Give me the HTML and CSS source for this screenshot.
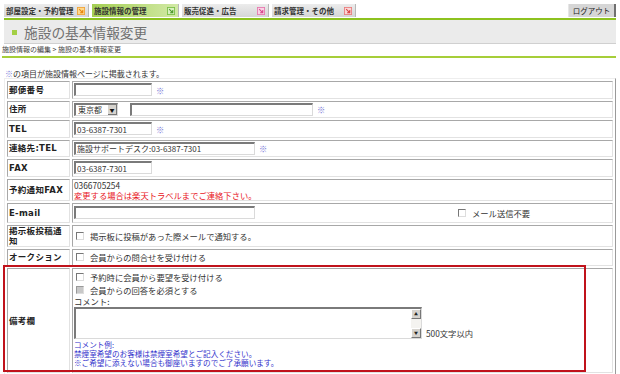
FILE: index.html
```html
<!DOCTYPE html>
<html lang="ja">
<head>
  <meta charset="UTF-8">
  <title>施設の基本情報変更</title>
  <link rel="stylesheet" href="styles.css">
</head>
<body>
  <div class="page">
    <div class="nav">
      <a class="tab">部屋設定・予約管理
        <svg class="tab-icon" viewBox="0 0 9 9" width="9" height="9"><rect x="0.5" y="0.5" width="8" height="8" fill="#ffd98c" stroke="#f2a43a"/><path d="M2.5 2.5 L6.5 6.5 M6.5 3.5 V6.5 H3.5" stroke="#e8850f" stroke-width="1.2" fill="none"/></svg>
      </a>
      <a class="tab active">施設情報の管理
        <svg class="tab-icon" viewBox="0 0 9 9" width="9" height="9"><rect x="0.5" y="0.5" width="8" height="8" fill="#d8efc0" stroke="#7cc04a"/><path d="M2.5 2.5 L6.5 6.5 M6.5 3.5 V6.5 H3.5" stroke="#4d9a2a" stroke-width="1.2" fill="none"/></svg>
      </a>
      <a class="tab">販売促進・広告
        <svg class="tab-icon" viewBox="0 0 9 9" width="9" height="9"><rect x="0.5" y="0.5" width="8" height="8" fill="#f9d3e6" stroke="#e77bb0"/><path d="M2.5 2.5 L6.5 6.5 M6.5 3.5 V6.5 H3.5" stroke="#d8488e" stroke-width="1.2" fill="none"/></svg>
      </a>
      <a class="tab">請求管理・その他
        <svg class="tab-icon" viewBox="0 0 9 9" width="9" height="9"><rect x="0.5" y="0.5" width="8" height="8" fill="#fbd6d6" stroke="#ea7f7f"/><path d="M2.5 2.5 L6.5 6.5 M6.5 3.5 V6.5 H3.5" stroke="#d94444" stroke-width="1.2" fill="none"/></svg>
      </a>
      <a class="logout">ログアウト</a>
    </div>

    <div class="title-bar">
      <span class="title-mark"></span>
      <h1>施設の基本情報変更</h1>
    </div>
    <div class="crumb">施設情報の編集 &gt; 施設の基本情報変更</div>

    <p class="note"><span class="mark">※</span>の項目が施設情報ページに掲載されます。</p>

    <table class="info">
      <tr>
        <th>郵便番号</th>
        <td><div class="line"><input class="field short" type="text"><span class="mark">※</span></div></td>
      </tr>
      <tr>
        <th>住所</th>
        <td>
          <div class="line">
            <span class="select-wrap">
              <select class="pref"><option>東京都</option></select>
              <span class="select-btn">▼</span>
            </span>
            <input class="field address" type="text">
            <span class="mark">※</span>
          </div>
        </td>
      </tr>
      <tr>
        <th>TEL</th>
        <td><div class="line"><input class="field short" type="text" value="03-6387-7301"><span class="mark">※</span></div></td>
      </tr>
      <tr>
        <th>連絡先:TEL</th>
        <td><div class="line"><input class="field long" type="text" value="施設サポートデスク:03-6387-7301"><span class="mark">※</span></div></td>
      </tr>
      <tr>
        <th>FAX</th>
        <td><div class="line"><input class="field short" type="text" value="03-6387-7301"></div></td>
      </tr>
      <tr class="row-fax">
        <th>予約通知FAX</th>
        <td class="top">
          <div class="text-line">0366705254</div>
          <div class="text-line warn">変更する場合は楽天トラベルまでご連絡下さい。</div>
        </td>
      </tr>
      <tr class="row-mail">
        <th>E-mail</th>
        <td>
          <div class="line">
            <input class="field long" type="text">
            <label class="check mail-off"><input type="checkbox">メール送信不要</label>
          </div>
        </td>
      </tr>
      <tr class="row-board">
        <th>掲示板投稿通知</th>
        <td><label class="check"><input type="checkbox">掲示板に投稿があった際メールで通知する。</label></td>
      </tr>
      <tr>
        <th>オークション</th>
        <td><label class="check"><input type="checkbox">会員からの問合せを受け付ける</label></td>
      </tr>
      <tr class="row-memo">
        <th>備考欄</th>
        <td class="top">
          <label class="check memo-check"><input type="checkbox">予約時に会員から要望を受け付ける</label>
          <label class="check memo-check"><input type="checkbox" disabled>会員からの回答を必須とする</label>
          <div class="text-line">コメント:</div>
          <div class="memo-line">
            <div class="memo-box">
              <textarea class="memo"></textarea>
              <div class="scroll">
                <span class="scroll-btn">▲</span>
                <span class="scroll-btn">▼</span>
              </div>
            </div>
            <span class="limit">500文字以内</span>
          </div>
          <div class="example">
            <div>コメント例:</div>
            <div>禁煙室希望のお客様は禁煙室希望とご記入ください。</div>
            <div>※ご希望に添えない場合も御座いますのでご了承願います。</div>
          </div>
        </td>
      </tr>
    </table>

    <div class="highlight"></div>
  </div>
</body>
</html>
```

FILE: styles.css
```css
body {
  margin: 0;
  font-family: "Noto Sans CJK JP", sans-serif;
  font-size: 8.3px;
  color: #333;
  background-color: #fff;
}
.page {
  position: relative;
  width: 612px;
  margin-left: 4px;
  padding-top: 4px;
}

/* top navigation */
.nav {
  display: flex;
  gap: 3px;
  height: 13px;
  padding-bottom: 1px;
  border-bottom: 2px solid #8dc21f;
}
.tab {
  display: flex;
  align-items: center;
  justify-content: space-between;
  width: 87px;
  padding: 0 3px 0 2px;
  box-sizing: border-box;
  background: linear-gradient(#ececec, #d6d6d6);
  border-right: 1px solid #b8b8b8;
  font-size: 7.5px;
  font-weight: bold;
  line-height: 13px;
  color: #333;
}
.tab:first-child {
  width: 85px;
}
.tab:nth-child(4) {
  width: 84px;
}
.tab.active {
  background: linear-gradient(to right, #a4cf53, #d2e9a6);
}
.tab-icon {
  display: block;
  width: 8px;
  height: 8px;
}
.logout {
  margin-left: auto;
  width: 48px;
  box-sizing: border-box;
  background-color: #d6d6d6;
  border-left: 1px solid #e6e6e6;
  border-right: 2px solid #6f6f6f;
  text-align: center;
  font-size: 7.5px;
  line-height: 13px;
  color: #222;
}

/* page title */
.title-bar {
  display: flex;
  align-items: center;
  height: 23px;
  background-color: #ebebeb;
  border-bottom: 1px solid #d0d0d0;
}
.title-mark {
  width: 5px;
  height: 5px;
  margin: 1px 7px 0 8px;
  background-color: #a3cf45;
}
.title-bar h1 {
  margin: 0;
  font-size: 13.7px;
  font-weight: normal;
  color: #707070;
}
.crumb {
  height: 12px;
  line-height: 11px;
  font-size: 7px;
  color: #444;
  border-bottom: 2px solid #a6ce39;
  margin-left: -2px;
}
.note {
  margin: 11px 0 0 1px;
  line-height: 9px;
  font-size: 8px;
}
.mark {
  color: #7a7ad8;
}

/* form table */
.info {
  width: 612px;
  border-collapse: separate;
  border-spacing: 2px;
  border: 1px solid;
  border-color: #eeeeee #9a9a9a #9a9a9a #eeeeee;
}
.info tr {
  height: 17.5px;
}
.info th,
.info td {
  padding: 0 1px;
  border: 1px solid;
  border-color: #a8a8a8 #e2e2e2 #e2e2e2 #a8a8a8;
  vertical-align: middle;
}
.info th {
  width: 59px;
  text-align: left;
  font-family: "DejaVu Sans", "Noto Sans CJK JP", sans-serif;
  font-size: 8.5px;
  line-height: 10px;
  letter-spacing: 0.3px;
  color: #222;
}
.info td.top {
  vertical-align: top;
}
.info .row-fax,
.info .row-mail {
  height: 20px;
}
.info .row-board {
  height: 21.5px;
}
.info .row-memo {
  height: 105px;
}

.line {
  display: flex;
  align-items: center;
  gap: 4px;
}
.field {
  height: 13px;
  box-sizing: border-box;
  margin: 0;
  padding: 0 1px;
  border-top: 2px solid #7a7a7a;
  border-left: 2px solid #7a7a7a;
  border-right: 1px solid #dadada;
  border-bottom: 1px solid #dadada;
  font-family: "Noto Sans CJK JP", sans-serif;
  font-size: 8px;
  color: #333;
  background-color: #fff;
}
.field.short {
  width: 78px;
}
.field.long {
  width: 181px;
}
.field.address {
  width: 183px;
  margin-left: 8px;
}

.select-wrap {
  position: relative;
  display: block;
  width: 44px;
  height: 13px;
}
.pref {
  appearance: none;
  width: 44px;
  height: 13px;
  box-sizing: border-box;
  margin: 0;
  padding: 0 2px;
  border-top: 2px solid #7a7a7a;
  border-left: 2px solid #7a7a7a;
  border-right: 1px solid #dadada;
  border-bottom: 1px solid #dadada;
  border-radius: 0;
  font-family: "Noto Sans CJK JP", sans-serif;
  font-size: 8px;
  line-height: 9px;
  color: #333;
  background-color: #fff;
}
.select-btn {
  position: absolute;
  top: 2px;
  right: 1px;
  width: 9px;
  height: 10px;
  box-sizing: border-box;
  background-color: #d6d3ce;
  border-right: 1px solid #777;
  border-bottom: 1px solid #777;
  font-size: 5px;
  line-height: 9px;
  text-align: center;
  color: #111;
}

.check {
  display: flex;
  align-items: center;
  gap: 6px;
  padding-left: 2px;
  line-height: 10px;
}
.check input {
  appearance: none;
  width: 8px;
  height: 8px;
  margin: 0;
  box-sizing: border-box;
  border-top: 1px solid #777;
  border-left: 1px solid #777;
  border-right: 1px solid #ddd;
  border-bottom: 1px solid #ddd;
  background-color: #fff;
}
.check input:disabled {
  background-color: #c8c8c8;
  border-color: #999 #ddd #ddd #999;
}
.mail-off {
  margin-left: 197px;
}
.memo-check {
  height: 13px;
}
.row-memo td {
  padding-top: 1px;
}

.text-line {
  line-height: 10px;
}
.warn {
  color: #e8141c;
}
.memo-line {
  display: flex;
  align-items: flex-end;
  gap: 4px;
  margin-top: 1px;
}
.memo-box {
  display: flex;
  width: 348px;
  height: 32px;
  box-sizing: border-box;
  border-top: 2px solid #7a7a7a;
  border-left: 2px solid #7a7a7a;
  border-right: 1px solid #dadada;
  border-bottom: 1px solid #dadada;
  background-color: #fff;
}
.memo {
  flex: 1;
  margin: 0;
  padding: 0;
  border: none;
  resize: none;
  outline: none;
}
.scroll {
  display: flex;
  flex-direction: column;
  justify-content: space-between;
  width: 10px;
  background-color: #f4f3f0;
}
.scroll-btn {
  height: 10px;
  box-sizing: border-box;
  background-color: #d6d3ce;
  border-top: 1px solid #fff;
  border-left: 1px solid #fff;
  border-right: 1px solid #777;
  border-bottom: 1px solid #777;
  font-size: 4px;
  line-height: 8px;
  text-align: center;
  color: #222;
}
.limit {
  line-height: 10px;
  margin-bottom: 1px;
}
.example {
  margin-top: 1px;
  color: #3333cc;
  font-size: 7.6px;
  line-height: 9px;
}

/* red annotation frame */
.highlight {
  position: absolute;
  left: -1px;
  top: 265px;
  width: 583px;
  height: 107px;
  box-sizing: border-box;
  border: 2px solid #c0121b;
}
```
